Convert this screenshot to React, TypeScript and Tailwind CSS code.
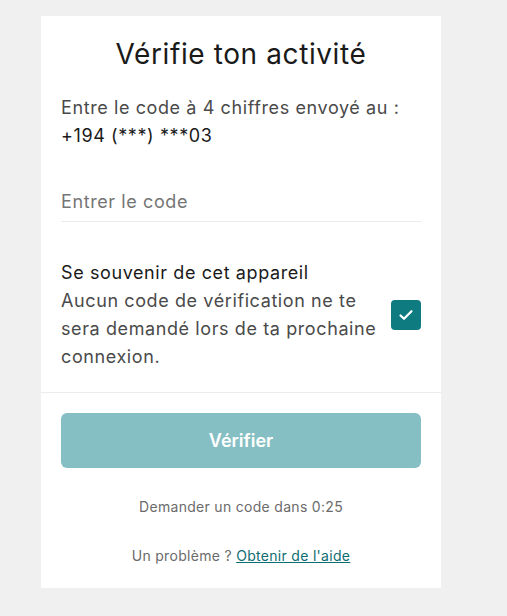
import React, { useState } from 'react';

const App = () => {
  const [code, setCode] = useState('');
  const [remember, setRemember] = useState(true);

  return (
    <div className="min-h-screen bg-[#f0f0f0] pt-[16px]" style={{ fontFamily: 'Inter, "Noto Sans", sans-serif' }}>
      <div className="ml-[41px] w-[400px] bg-white">
        {/* Top */}
        <div className="px-5 pt-5 pb-[21px]">
          <h1 className="text-center text-[28px] leading-[36px] tracking-[0.6px] text-[#1a1a1a] font-normal">
            Vérifie ton activité
          </h1>
          <p className="mt-[22px] text-[18px] leading-[28px] tracking-[0.6px] text-[#4a4a4a]">
            Entre le code à 4 chiffres envoyé au :
            <br />
            <span className="text-[#1a1a1a]">+194 (***) ***03</span>
          </p>

          <input
            type="text"
            value={code}
            onChange={(e) => setCode(e.target.value)}
            placeholder="Entrer le code"
            className="mt-[31px] block h-[41px] w-full border-b border-[#ebebeb] text-[18px] tracking-[0.6px] text-[#1a1a1a] placeholder:text-[#757575] outline-none"
          />

          <div className="mt-[37px] flex items-center gap-3">
            <div className="flex-1 text-[18px] leading-[28px] tracking-[0.6px]">
              <div className="text-[#1a1a1a]">Se souvenir de cet appareil</div>
              <div className="text-[#4a4a4a]">
                Aucun code de vérification ne te sera demandé lors de ta prochaine connexion.
              </div>
            </div>
            <button
              type="button"
              onClick={() => setRemember(!remember)}
              className={`flex h-[30px] w-[30px] shrink-0 items-center justify-center rounded-[4px] ${
                remember ? 'bg-[#0e7b81]' : 'border-2 border-[#b0b0b0] bg-white'
              }`}
            >
              {remember && (
                <svg width="18" height="18" viewBox="0 0 18 18" fill="none">
                  <path d="M3.5 9.5l3.5 3.3L14.5 5.2" stroke="white" strokeWidth="2.2" strokeLinecap="round" strokeLinejoin="round" />
                </svg>
              )}
            </button>
          </div>
        </div>

        {/* Bottom */}
        <div className="border-t border-[#ececec] px-5 pt-5 pb-[21px]">
          <button
            type="button"
            className="h-[55px] w-full rounded-md bg-[#86bfc3] text-[18px] font-semibold text-white"
          >
            Vérifier
          </button>
          <p className="mt-[28px] text-center text-[14px] leading-[22px] tracking-[0.3px] text-[#6b6b6b]">
            Demander un code dans 0:25
          </p>
          <p className="mt-[27px] text-center text-[14px] leading-[22px] tracking-[0.3px] text-[#6b6b6b]">
            Un problème ?{' '}
            <a href="#" className="text-[#0e6d73] underline">
              Obtenir de l'aide
            </a>
          </p>
        </div>
      </div>
    </div>
  );
};

export default App;
